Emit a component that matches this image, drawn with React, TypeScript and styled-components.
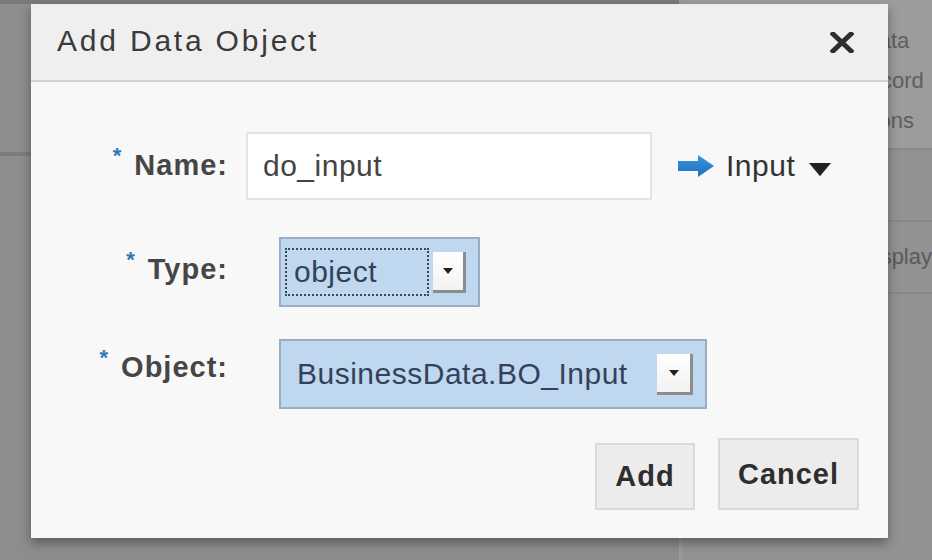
import React from "react";
import styled, { createGlobalStyle } from "styled-components";

const Global = createGlobalStyle`
  html, body { margin: 0; padding: 0; }
  body {
    width: 932px;
    height: 560px;
    overflow: hidden;
    font-family: "Liberation Sans", Arial, sans-serif;
    background: #8d8d8d;
  }
`;

const Page = styled.div`
  position: relative;
  width: 932px;
  height: 560px;
  display: flex;
  background: #8d8d8d;
  overflow: hidden;
`;

const LeftPane = styled.div`
  width: 688px;
  display: flex;
  flex-direction: column;
  border-right: 3px solid #9a9a9a;
`;

const LeftHead = styled.div`
  height: 156px;
  border-bottom: 4px solid #7c7c7c;
  border-top: 4px solid #7a7a7a;
  box-sizing: border-box;
`;

const RightPane = styled.div`
  flex: 1;
  display: flex;
  flex-direction: column;
  background: #929292;
`;

const RightHead = styled.div`
  height: 150px;
  box-sizing: border-box;
  background: #9c9c9c;
  border-bottom: 2px solid #888;
  display: flex;
  flex-direction: column;
  justify-content: space-evenly;
  padding-top: 14px;
  color: #5e5e5e;
  font-size: 22px;
  white-space: nowrap;
`;

const HeadLine = styled.span<{ $indent: number }>`
  padding-left: ${(p) => p.$indent}px;
`;

const RightRow = styled.div<{ $h: number }>`
  height: ${(p) => p.$h}px;
  border-bottom: 2px solid #888;
  display: flex;
  align-items: center;
  padding-left: 178px;
  color: #5a5a5a;
  font-size: 22px;
  white-space: nowrap;
`;

const Dialog = styled.div`
  position: absolute;
  left: 31px;
  top: 4px;
  width: 857px;
  height: 534px;
  background: #f8f8f8;
  box-shadow: 0 5px 10px rgba(0, 0, 0, 0.35);
  display: flex;
  flex-direction: column;
`;

const Header = styled.div`
  height: 76px;
  background: #efefef;
  border-bottom: 2px solid #d2d2d2;
  display: flex;
  align-items: center;
  justify-content: space-between;
  padding: 0 34px 0 26px;
`;

const Title = styled.div`
  font-size: 30px;
  letter-spacing: 2.8px;
  color: #3a3a3a;
  padding-bottom: 2px;
`;

const Body = styled.div`
  flex: 1;
  display: flex;
  flex-direction: column;
  padding: 50px 29px 0 0;
`;

const Row = styled.div<{ $mt: number }>`
  display: flex;
  align-items: center;
  margin-top: ${(p) => p.$mt}px;
`;

const Label = styled.div<{ $shift: number }>`
  width: 197px;
  text-align: right;
  font-size: 29px;
  font-weight: bold;
  color: #464646;
  letter-spacing: 1px;
  transform: translateY(${(p) => p.$shift}px);
  white-space: nowrap;
`;

const Star = styled.span`
  color: #2f78b4;
  font-size: 22px;
  vertical-align: 12px;
  margin-right: 12px;
`;

const TextInput = styled.div`
  margin-left: 18px;
  width: 406px;
  height: 68px;
  box-sizing: border-box;
  background: #ffffff;
  border: 2px solid #e4e4e4;
  display: flex;
  align-items: center;
  padding-left: 15px;
  font-size: 30px;
  letter-spacing: 0.5px;
  color: #444;
`;

const Direction = styled.div`
  display: flex;
  align-items: center;
  margin-left: 26px;
  gap: 12px;
  font-size: 30px;
  letter-spacing: 0.5px;
  color: #333;
`;

const Select = styled.div<{ $w: number }>`
  margin-left: 51px;
  width: ${(p) => p.$w}px;
  height: 70px;
  box-sizing: border-box;
  background: #bfd7ef;
  border: 2px solid #97aec6;
  display: flex;
  align-items: center;
  padding: 0 12px 0 4px;
  gap: 4px;
`;

const SelectValue = styled.div<{ $focus: boolean }>`
  flex: ${(p) => (p.$focus ? "0 0 auto" : "1")};
  width: ${(p) => (p.$focus ? "144px" : "auto")};
  height: 48px;
  box-sizing: border-box;
  border: 2px ${(p) => (p.$focus ? "dotted #3c4656" : "solid transparent")};
  display: flex;
  align-items: center;
  padding-left: ${(p) => (p.$focus ? "7px" : "10px")};
  font-size: 30px;
  letter-spacing: 0.5px;
  color: #33425a;
  white-space: nowrap;
`;

const DropBtn = styled.div`
  width: 36px;
  height: 41px;
  box-sizing: border-box;
  background: linear-gradient(#ffffff, #f2f2f2);
  border-right: 3px solid #8c8c8c;
  border-bottom: 3px solid #8c8c8c;
  display: flex;
  align-items: center;
  justify-content: center;
  margin-left: auto;
`;

const Footer = styled.div`
  display: flex;
  justify-content: flex-end;
  align-items: flex-end;
  gap: 23px;
  margin-top: 29px;
`;

const Button = styled.div<{ $w: number; $h: number }>`
  width: ${(p) => p.$w}px;
  height: ${(p) => p.$h}px;
  box-sizing: border-box;
  background: #ececec;
  border: 2px solid #dadada;
  display: flex;
  align-items: center;
  justify-content: center;
  font-size: 29px;
  font-weight: bold;
  color: #2e2e2e;
  letter-spacing: 1px;
`;

const Tri = ({ size = 10 }: { size?: number }) => (
  <svg width={size} height={size * 0.6} viewBox="0 0 10 6">
    <path d="M0 0 H10 L5 6 Z" fill="#222" />
  </svg>
);

const CloseX = () => (
  <svg width="24" height="21" viewBox="0 0 24 21">
    <path d="M3 2 L21 19 M21 2 L3 19" stroke="#2e2e2e" strokeWidth="5" strokeLinecap="square" />
  </svg>
);

const Arrow = () => (
  <svg width="36" height="22" viewBox="0 0 36 22">
    <defs>
      <linearGradient id="ag" x1="0" y1="0" x2="0" y2="1">
        <stop offset="0" stopColor="#3b95e0" />
        <stop offset="1" stopColor="#1f6fbf" />
      </linearGradient>
    </defs>
    <path d="M0 6 H20 V0 L36 11 L20 22 V16 H0 Z" fill="url(#ag)" />
  </svg>
);

export default function App() {
  return (
    <>
      <Global />
      <Page>
        <LeftPane>
          <LeftHead />
        </LeftPane>
        <RightPane>
          <RightHead>
            <HeadLine $indent={181}>Data</HeadLine>
            <HeadLine $indent={171}>Record</HeadLine>
            <HeadLine $indent={160}>Actions</HeadLine>
          </RightHead>
          <RightRow $h={70}>|</RightRow>
          <RightRow $h={70}>Display</RightRow>
        </RightPane>

        <Dialog>
          <Header>
            <Title>Add Data Object</Title>
            <CloseX />
          </Header>
          <Body>
            <Row $mt={0}>
              <Label $shift={-4}>
                <Star>*</Star>Name:
              </Label>
              <TextInput>do_input</TextInput>
              <Direction>
                <Arrow />
                <span>Input</span>
                <span style={{ marginLeft: 2 }}>
                  <Tri size={22} />
                </span>
              </Direction>
            </Row>
            <Row $mt={37}>
              <Label $shift={-6}>
                <Star>*</Star>Type:
              </Label>
              <Select $w={201}>
                <SelectValue $focus>object</SelectValue>
                <DropBtn>
                  <Tri size={10} />
                </DropBtn>
              </Select>
            </Row>
            <Row $mt={32}>
              <Label $shift={-10}>
                <Star>*</Star>Object:
              </Label>
              <Select $w={428}>
                <SelectValue $focus={false}>BusinessData.BO_Input</SelectValue>
                <DropBtn>
                  <Tri size={10} />
                </DropBtn>
              </Select>
            </Row>
            <Footer>
              <Button $w={100} $h={67}>Add</Button>
              <Button $w={141} $h={72}>Cancel</Button>
            </Footer>
          </Body>
        </Dialog>
      </Page>
    </>
  );
}
